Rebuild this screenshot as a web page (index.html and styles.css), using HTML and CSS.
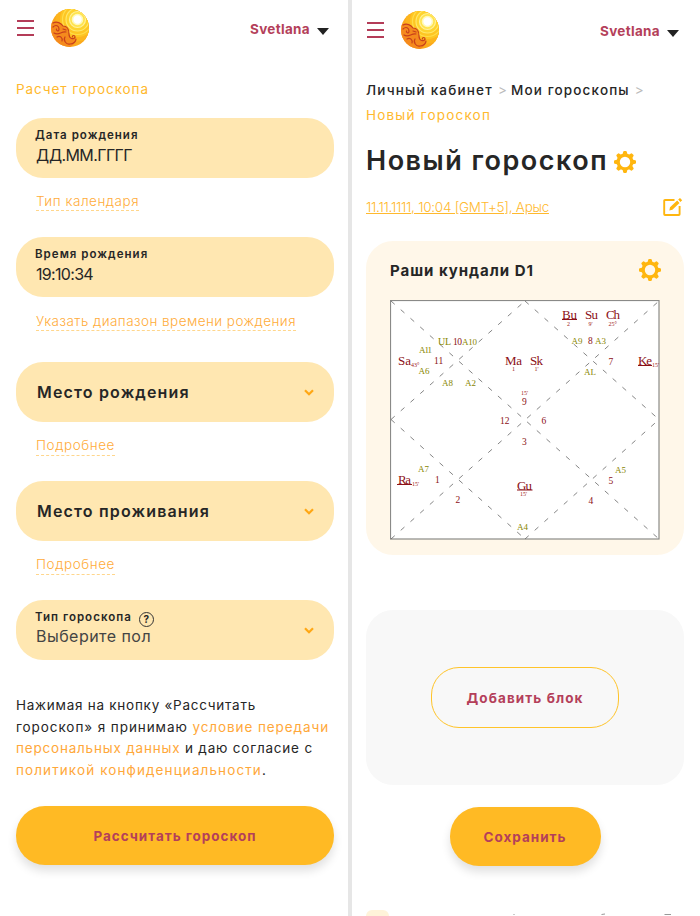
FILE: index.html
```html
<!DOCTYPE html>
<html lang="ru">
<head>
<meta charset="utf-8">
<title>Новый гороскоп</title>
<link rel="stylesheet" href="styles.css">
</head>
<body>
<svg class="defs" width="0" height="0" aria-hidden="true">
  <defs>
    <clipPath id="disc"><circle cx="19" cy="19" r="19"/></clipPath>
    <symbol id="logo" viewBox="0 0 38 38">
      <g clip-path="url(#disc)">
        <rect width="38" height="38" fill="#fba91c"/>
        <circle cx="26.500" cy="10.500" r="22" fill="#fdb51d"/>
        <circle cx="26.500" cy="10.500" r="17.500" fill="#fec623"/>
        <circle cx="26.500" cy="10.500" r="15" fill="none" stroke="#ffdc4a" stroke-width="1.200"/>
        <circle cx="26.500" cy="10.500" r="11.500" fill="#fed32e" stroke="#ffe76a" stroke-width="1.200"/>
        <circle cx="26.500" cy="10.500" r="8" fill="#ffe34c" stroke="#fff09a" stroke-width="1.200"/>
        <circle cx="26.500" cy="10.500" r="5" fill="#fff" stroke="#fff8b8" stroke-width="1.600"/>
        <path d="M0 14C5 11 10 14 12 17C16 17 18 21 18 26C20 31 25 30 24 27C26 30 25 35 19 38H0Z" fill="#f58a1d"/>
        <g fill="none" stroke="#c8401b" stroke-width="1.200" stroke-linecap="round">
          <path d="M2 14C6 12 10 14 12 17C16 17 18 20 18 25C18 30 23 31 24 28C24 26 21 26 21.500 28"/>
          <path d="M2 18C5 15 8 17 8 20C8 23 5 22 5.500 20M3 24C8 27 10 22 15 23"/>
          <path d="M6 28C9 26 12 29 11 32M14 28C12 31 15 36 19 35C23 35 25 32 25 30M12 20L15 21"/>
        </g>
      </g>
    </symbol>
    <symbol id="gear" viewBox="0 0 22 22">
      <circle cx="11" cy="11" r="6.800" fill="none" stroke="currentColor" stroke-width="3.200"/>
      <g fill="currentColor">
        <path id="tooth" d="M8.400 4L9.200 0.800Q9.400 0 10.200 0H11.800Q12.600 0 12.800 0.800L13.600 4Z"/>
        <use href="#tooth" transform="rotate(45 11 11)"/><use href="#tooth" transform="rotate(90 11 11)"/>
        <use href="#tooth" transform="rotate(135 11 11)"/><use href="#tooth" transform="rotate(180 11 11)"/>
        <use href="#tooth" transform="rotate(225 11 11)"/><use href="#tooth" transform="rotate(270 11 11)"/>
        <use href="#tooth" transform="rotate(315 11 11)"/>
      </g>
    </symbol>
    <symbol id="chevron" viewBox="0 0 10 7"><path d="M1 1.200L5 5.200L9 1.200" fill="none" stroke="#ffa714" stroke-width="2.200"/></symbol>
  </defs>
</svg>
<main class="screens">
  <section class="pane">
    <header class="top">
      <span class="burger"><i></i><i></i><i></i></span>
      <svg class="logo"><use href="#logo"/></svg>
      <span class="user">Svetlana</span>
      <span class="caret"></span>
    </header>
    <h2 class="crumb-current form-title">Расчет гороскопа</h2>
    <div class="field"><div class="stack"><span class="label">Дата рождения</span><span class="value date">ДД.ММ.ГГГГ</span></div></div>
    <a class="more">Тип календаря</a>
    <div class="field"><div class="stack"><span class="label">Время рождения</span><span class="value time">19:10:34</span></div></div>
    <a class="more range">Указать диапазон времени рождения</a>
    <div class="field"><span class="big">Место рождения</span><svg class="chev"><use href="#chevron"/></svg></div>
    <a class="more details">Подробнее</a>
    <div class="field"><span class="big">Место проживания</span><svg class="chev"><use href="#chevron"/></svg></div>
    <a class="more details">Подробнее</a>
    <div class="field"><div class="stack"><span class="row"><span class="label">Тип гороскопа</span><span class="help">?</span></span><span class="value choice">Выберите пол</span></div><svg class="chev"><use href="#chevron"/></svg></div>
    <p class="terms">
      <span class="p1">Нажимая на кнопку «Рассчитать</span><br>
      <span class="p2">гороскоп» я принимаю <a>условие передачи</a></span><br>
      <span class="p3"><a>персональных данных</a> и даю согласие с</span><br>
      <span class="p4"><a>политикой конфиденциальности</a>.</span>
    </p>
    <button class="btn wide">Рассчитать гороскоп</button>
  </section>
  <section class="pane second">
    <header class="top">
      <span class="burger"><i></i><i></i><i></i></span>
      <svg class="logo"><use href="#logo"/></svg>
      <span class="user">Svetlana</span>
      <span class="caret"></span>
    </header>
    <nav class="crumbs">
      <div class="crumb-row"><a>Личный кабинет</a><i>&gt;</i><a>Мои гороскопы</a><i>&gt;</i></div>
      <div class="crumb-current last">Новый гороскоп</div>
    </nav>
    <div class="heading"><h1>Новый гороскоп</h1><svg class="gear"><use href="#gear"/></svg></div>
    <div class="birth">
      <a class="birth-link">11.11.1111, 10:04 [GMT+5], Арыс</a>
      <svg class="edit" viewBox="0 0 20 20"><path d="M11.500 3H2Q1.200 3 1.200 3.800V17.200Q1.200 18 2 18H15.800Q16.600 18 16.600 17.200V9" fill="none" stroke="#ffb60f" stroke-width="1.900"/><path d="M6.300 13.400L7 10.200L14.200 3.500L16.500 5.900L9.400 12.800Z M15.200 2.600L17 0.900L19.200 3.200L17.400 5Z" fill="#ffb60f"/></svg>
    </div>
    <article class="card">
      <div class="card-head"><h3>Раши кундали D1</h3><svg class="gear"><use href="#gear"/></svg></div>
      <svg class="chart" viewBox="390 300 270 240">
        <rect x="390.500" y="300.500" width="268.500" height="238.500" fill="#fff" stroke="#8a8a88" stroke-width="1.200"/>
        <g class="lines">
          <path d="M391 301L659 539"/><path d="M391 539L659 301"/>
          <path d="M391 419.500L525 301"/><path d="M525 301L659 419.500"/>
          <path d="M391 419.500L525 539"/><path d="M525 539L659 419.500"/>
        </g>
        <g class="planets">
          <text x="562" y="319" textLength="15">Bu</text><text x="585" y="319" textLength="13">Su</text><text x="606" y="319" textLength="14">Ch</text>
          <text x="398" y="365" textLength="13">Sa</text><text x="505" y="365" textLength="17">Ma</text><text x="530" y="365" textLength="13">Sk</text>
          <text x="638" y="365" textLength="14">Ke</text><text x="398" y="484" textLength="13">Ra</text><text x="517" y="490" textLength="15">Gu</text>
          <path d="M562 319.500H577M638 365.500H652M397 484.500H412M517 490H532.500"/>
        </g>
        <g class="signs">
          <text x="453" y="345" textLength="9">10</text><text x="434" y="364">11</text><text x="588" y="344">8</text><text x="608.500" y="365">7</text>
          <text x="522" y="405">9</text><text x="500" y="424">12</text><text x="541.500" y="424">6</text><text x="522" y="445">3</text>
          <text x="435" y="483">1</text><text x="455.500" y="503">2</text><text x="608.500" y="484">5</text><text x="588.500" y="504">4</text>
        </g>
        <g class="padas">
          <text class="lagna" x="438" y="345" textLength="13">UL</text><text x="462" y="345" textLength="15">A10</text>
          <text x="419" y="353" textLength="13">A11</text><text x="418.500" y="374">A6</text><text x="442" y="386">A8</text><text x="465" y="386">A2</text>
          <text x="571.500" y="344">A9</text><text x="595" y="344">A3</text><text x="584" y="374.500">AL</text>
          <text x="418" y="472">A7</text><text x="615" y="473">A5</text><text x="517" y="530">A4</text>
        </g>
        <g class="degrees">
          <text x="411" y="367">43°</text><text x="512" y="371">1</text><text x="534.500" y="371">1'</text><text x="567" y="326">2</text><text x="588.500" y="326">9'</text><text x="608.500" y="326">25°</text>
          <text x="521" y="395">15'</text><text x="652" y="367">15'</text><text x="412" y="486">15'</text><text x="520" y="496">15'</text>
        </g>
      </svg>
    </article>
    <div class="add"><button class="outline">Добавить блок</button></div>
    <button class="btn save">Сохранить</button>
    <div class="next"><span class="tile"></span><svg viewBox="0 0 290 6"><path d="M124.500 4.500H125.500M212.500 4.500L216 4M275.500 4.500H282" stroke="#999" stroke-width="1" fill="none"/></svg></div>
  </section>
</main>
</body>
</html>
```
FILE: styles.css
```css
* { box-sizing: border-box; }
body { margin: 0; background: #fff; font-family: Inter, "Open Sans", sans-serif; color: #262626; font-size: 13.5px; }
h1, h2, h3, p { margin: 0; }
.defs { display: block; }
.screens { display: grid; grid-template-columns: 348px 348px; gap: 4px; height: 916px; background: #e6e6e6; overflow: hidden; }
.pane { background: #fff; padding: 9px 14px 0 16px; display: flex; flex-direction: column; overflow: hidden; }
.second { padding: 11px 16px 0 14px; }
.top { display: flex; align-items: center; height: 38px; flex: none; }
.burger { width: 17px; margin-left: 1px; display: flex; flex-direction: column; gap: 5px; }
.burger i { height: 2px; background: #b43c58; }
.logo { width: 38px; height: 38px; margin-left: 17px; }
.user { margin-left: auto; color: #b43f5a; font-weight: 700; line-height: 20px; letter-spacing: .32px; padding-top: 1px; }
.caret { border: 6px solid transparent; border-top: 7px solid #222; border-bottom: 0; margin: 6px 5px 0 7px; }
.crumb-current { color: #ffb92e; font-weight: 400; font-size: 13.5px; line-height: 24px; letter-spacing: .92px; }
.crumb-current.last { letter-spacing: 1.19px; }
.form-title { margin: 30px 0 17px 0; }
.field { height: 60px; flex: none; background: #ffe7b1; border-radius: 27px; padding: 0 20px; display: flex; align-items: center; justify-content: space-between; }
.stack { display: flex; flex-direction: column; margin-top: -4px; }
.row { display: flex; align-items: center; height: 16px; gap: 7px; }
.label { font-size: 11.5px; font-weight: 600; line-height: 17px; letter-spacing: 1.03px; margin-left: -1px; }
.value { font-size: 16px; line-height: 22px; }
.date { letter-spacing: -.58px; }
.time { letter-spacing: -.68px; }
.choice { letter-spacing: .46px; color: #444; }
.help { width: 15px; height: 15px; margin-top: 4px; border: 1.5px solid #333; border-radius: 50%; font: 700 10px/12px Inter, sans-serif; text-align: center; flex: none; }
.big { font-size: 16px; font-weight: 600; margin-left: 1px; letter-spacing: 1.17px; }
.chev { width: 10px; height: 7px; }
.more { align-self: flex-start; margin: 14px 0 26px 20px; line-height: 18px; height: 19px; color: #ffac3a; font-weight: 300; letter-spacing: .52px; border-bottom: 1px dashed #ffd68c; white-space: nowrap; }
.range { margin: 15px 0 31px 20px; letter-spacing: .45px; }
.details { height: 20px; margin-bottom: 25px; letter-spacing: .58px; }
.terms { line-height: 21.5px; margin: 35px 0 25px; white-space: nowrap; }
.terms a { color: #ffa83a; }
.p1 { letter-spacing: .74px; }
.p2 { letter-spacing: .92px; }
.p3 { letter-spacing: .8px; }
.p4 { letter-spacing: 1.1px; }
.btn { border: 0; padding: 0; height: 59px; border-radius: 29px; background: #ffba24; color: #b43f5a; font: 700 13.5px Inter, sans-serif; letter-spacing: .98px; box-shadow: 0 6px 10px rgba(0,0,0,.12); flex: none; }
.crumbs { margin-top: 30px; }
.crumb-row { display: flex; line-height: 23px; height: 24px; font-weight: 500; letter-spacing: 1.14px; white-space: nowrap; }
.crumb-row a:first-child { letter-spacing: 1.2px; }
.crumb-row i { width: 18px; padding-left: 1px; text-align: center; color: #bbb; font-style: normal; font-weight: 400; letter-spacing: 0; }
.heading { display: flex; align-items: center; height: 40px; margin-top: 13px; gap: 6px; }
.heading .gear { margin-top: 4px; }
h1 { font-size: 27px; font-weight: 600; white-space: nowrap; letter-spacing: 1.5px; }
.gear { width: 22px; height: 22px; color: #ffb60f; flex: none; }
.birth { display: flex; justify-content: space-between; align-items: center; height: 22px; margin-top: 16px; }
.birth-link { font-weight: 300; color: #ffb92e; letter-spacing: -.27px; text-decoration: underline; white-space: nowrap; }
.edit { width: 20px; height: 20px; margin-right: 1px; }
.card { margin-top: 23px; height: 314px; flex: none; border-radius: 27px; background: #fff7e9; padding: 17px 23px 0 24px; }
.card-head { display: flex; justify-content: space-between; align-items: center; height: 24px; }
h3 { font-size: 15px; font-weight: 700; letter-spacing: .98px; }
.chart { display: block; width: 270px; height: 240px; margin-top: 18px; }
.lines { stroke: #666; stroke-width: .8; stroke-dasharray: 5 8; fill: none; }
.chart text { font-family: "Liberation Serif", serif; }
.planets { fill: #8c1016; font-size: 13px; }
.planets path { stroke: #8c1016; stroke-width: 1.2; }
.signs { fill: #8c1016; font-size: 9.5px; }
.padas { fill: #888600; font-size: 9px; }
.padas .lagna { font-size: 10px; }
.degrees { fill: #a02020; font-size: 6px; }
.add { margin-top: 55px; height: 175px; flex: none; border-radius: 27px; background: #f8f8f8; display: flex; align-items: center; justify-content: center; }
.outline { width: 188px; height: 61px; padding: 0; border: 1px solid #ffc42a; border-radius: 28px; background: none; color: #b43f5a; font: 700 13.5px Inter, sans-serif; letter-spacing: 1.08px; }
.save { width: 151px; margin: 22px auto 0; }
.next { display: flex; margin-top: 44px; height: 6px; }
.tile { width: 23px; height: 23px; background: #fff3d9; border-radius: 6px; flex: none; }
.next svg { width: 290px; height: 6px; }
```
